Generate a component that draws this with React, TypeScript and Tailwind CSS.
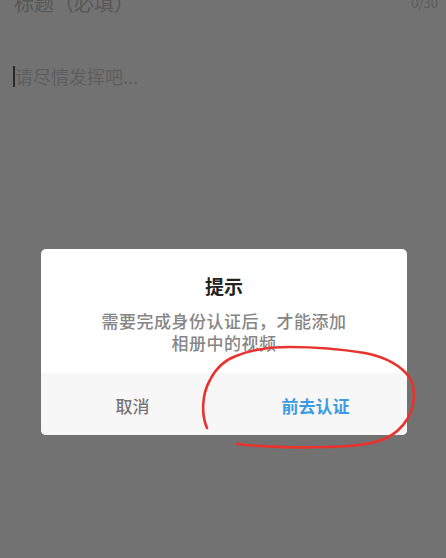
export default function App() {
  return (
    <div
      className="relative h-[558px] w-[446px] overflow-hidden bg-[#727272]"
      style={{ fontFamily: '"Noto Sans CJK SC", "Noto Sans", sans-serif' }}
    >
      {/* page behind the dim overlay */}
      <div className="flex items-center justify-between pl-[14px] pr-[8px] -mt-[11px]">
        <span className="text-[20px] leading-[28px] text-[#585858]">标题（必填）</span>
        <span className="text-[13px] leading-[28px] text-[#5c5c5c]">0/30</span>
      </div>
      <div className="mt-[47px] flex items-center pl-[13px]">
        <span className="h-[21px] w-[2px] bg-[#2a2a2a]" />
        <span className="text-[18px] leading-[24px] text-[#5e5e5e]">请尽情发挥吧...</span>
      </div>

      {/* modal */}
      <div className="absolute inset-0 pt-[249px] pl-[41px]">
        <div className="w-[366px] overflow-hidden rounded-[5px] bg-white">
          <div className="flex flex-col items-center px-6 pt-[24px] pb-[19px]">
            <div className="text-[19px] font-bold leading-[26px] text-[#222]">提示</div>
            <p className="mt-[11px] text-center text-[17px] font-medium leading-[22px] tracking-[0.5px] text-[#868686]">
              需要完成身份认证后，才能添加
              <br />
              相册中的视频
            </p>
          </div>
          <div className="flex h-[62px] bg-[#f7f7f7]">
            <button className="flex-1 pt-[3px] text-[17px] font-medium text-[#777]">取消</button>
            <button className="flex-1 pt-[3px] text-[17px] font-bold text-[#3d9be0]">前去认证</button>
          </div>
        </div>
      </div>

      {/* hand-drawn red annotation */}
      <svg className="pointer-events-none absolute inset-0" width="446" height="558" viewBox="0 0 446 558">
        <path
          d="M207 428 C201 414 202 394 210 380 C216 368 225 360 236 356 C250 350 268 347 290 347 C315 347 340 349 365 353 C385 357 400 364 410 378 C416 390 415 405 408 418 C402 428 394 435 384 439 C370 445 350 447 320 447 C295 448 265 447 237 444"
          fill="none"
          stroke="#e8342f"
          strokeWidth="2.6"
          strokeLinecap="round"
        />
      </svg>
    </div>
  )
}
